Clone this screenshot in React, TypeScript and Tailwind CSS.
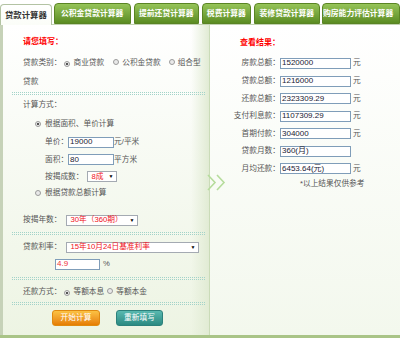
import React from "react";

const Radio = ({ checked }: { checked?: boolean }) => (
  <span className="inline-flex items-center justify-center w-[6px] h-[6px] rounded-full border border-[#9b9b9b] bg-[#e9e9e9] shrink-0">
    {checked && <span className="w-[2px] h-[2px] rounded-full bg-[#222]" />}
  </span>
);

const Divider = () => (
  <div className="w-[193px] h-[3px] border-y border-dotted border-[#a3d3c9]" />
);

const Input = ({ value, w, red }: { value: string; w: string; red?: boolean }) => (
  <div
    className={`${w} h-[11px] bg-white border border-[#7f9db9] flex items-center pl-[1px] text-[8px] leading-none ${
      red ? "text-[#f0303a]" : "text-[#1a1a33]"
    }`}
  >
    {value}
  </div>
);

const Select = ({ value, w }: { value: string; w: string }) => (
  <div
    className={`${w} h-[11px] bg-white border border-[#a4aab2] flex items-center justify-between pl-[3px] pr-[3px] text-[7.7px] leading-none text-[#f0101a]`}
  >
    <span>{value}</span>
    <span className="text-[5px] text-black">▼</span>
  </div>
);

const Tab = ({ label, cls, active }: { label: string; cls: string; active?: boolean }) =>
  active ? (
    <div
      className={`${cls} h-[21px] -mb-[1px] relative z-10 rounded-t-[4px] border border-b-0 border-[#b3c3a3] bg-gradient-to-b from-[#ffffff] to-[#fbfdf8] flex items-center justify-center text-[8.4px] font-bold text-[#333]`}
    >
      {label}
    </div>
  ) : (
    <div
      className={`${cls} h-[21px] rounded-t-[4px] border border-[#5a8424] bg-gradient-to-b from-[#96c458] to-[#5b8c22] flex items-center justify-center text-[7.8px] font-bold text-white whitespace-nowrap overflow-hidden`}
    >
      {label}
    </div>
  );

export default function App() {
  return (
    <div className="relative w-[400px] h-[338px] overflow-hidden bg-white font-['Liberation_Sans','Noto_Sans_CJK_SC',sans-serif] text-[7.7px] text-[#555]">
      {/* tabs */}
      <div className="h-[24px] flex items-end">
        <Tab label="贷款计算器" cls="w-[53px]" active />
        <Tab label="公积金贷款计算器" cls="w-[79px] ml-[2px]" />
        <Tab label="提前还贷计算器" cls="w-[67px] ml-[3px]" />
        <Tab label="税费计算器" cls="w-[50px] ml-[3px]" />
        <Tab label="装修贷款计算器" cls="w-[68px] ml-[3px]" />
        <Tab label="购房能力评估计算器" cls="w-[80px] ml-[2px] !justify-start pl-[0px]" />
      </div>

      {/* content */}
      <div className="h-[314px] flex border-t border-b-[3px] border-t-[#c2d2b2] border-b-[#a9c487]">
        {/* left panel */}
        <div className="w-[210px] border-l-[3px] border-r border-l-[#c6d2b8] border-r-[#cadbb8] bg-[linear-gradient(to_right,transparent_188px,#e1ebd4_206px),linear-gradient(to_bottom,#ffffff,#edf4e3)] flex flex-col pl-[9px] pt-[9px]">
          <div className="h-[16px] flex items-center pl-[11px] text-[8px] font-bold text-[#ff0000]">请您填写：</div>
          <div className="h-[19px] mt-[3px] flex items-center pl-[11px] whitespace-nowrap">
            <span>贷款类别：</span>
            <span className="ml-[3px]"><Radio checked /></span>
            <span className="ml-[3px]">商业贷款</span>
            <span className="ml-[9px]"><Radio /></span>
            <span className="ml-[3px]">公积金贷款</span>
            <span className="ml-[8px]"><Radio /></span>
            <span className="ml-[3px]">组合型</span>
          </div>
          <div className="h-[19px] flex items-center pl-[11px]">贷款</div>
          <div className="mt-[1px]"><Divider /></div>
          <div className="h-[18px] mt-[1px] flex items-center pl-[11px]">计算方式：</div>
          <div className="h-[18px] mt-[1px] flex items-center pl-[23px]">
            <Radio checked />
            <span className="ml-[4px]">根据面积、单价计算</span>
          </div>
          <div className="h-[18px] flex items-center pl-[33px]">
            <span>单价：</span>
            <Input value="19000" w="w-[46px]" />
            <span>元/平米</span>
          </div>
          <div className="h-[17px] flex items-center pl-[33px]">
            <span>面积：</span>
            <Input value="80" w="w-[46px]" />
            <span>平方米</span>
          </div>
          <div className="h-[17px] flex items-center pl-[33px]">
            <span>按揭成数：</span>
            <span className="ml-[4px]"><Select value="8成" w="w-[30px]" /></span>
          </div>
          <div className="h-[16px] flex items-center pl-[23px]">
            <Radio />
            <span className="ml-[4px]">根据贷款总额计算</span>
          </div>
          <div className="h-[18px] mt-[10px] flex items-center pl-[11px]">
            <span>按揭年数：</span>
            <span className="ml-[5px]"><Select value="30年（360期）" w="w-[72px]" /></span>
          </div>
          <div className="mt-[3px]"><Divider /></div>
          <div className="h-[18px] mt-[3px] flex items-center pl-[11px]">
            <span>贷款利率：</span>
            <span className="ml-[5px]"><Select value="15年10月24日基准利率" w="w-[133px]" /></span>
          </div>
          <div className="h-[14px] mt-[1px] flex items-center pl-[43px]">
            <Input value="4.9" w="w-[45px]" red />
            <span className="ml-[3px]">%</span>
          </div>
          <div className="mt-[6px]"><Divider /></div>
          <div className="h-[18px] mt-[3px] flex items-center pl-[11px] whitespace-nowrap">
            <span>还款方式：</span>
            <span className="ml-[3px]"><Radio checked /></span>
            <span className="ml-[3px]">等额本息</span>
            <span className="ml-[3px]"><Radio /></span>
            <span className="ml-[3px]">等额本金</span>
          </div>
          <div className="mt-[1px]"><Divider /></div>
          <div className="mt-[5px] flex pl-[40px]">
            <div className="w-[48px] h-[16px] rounded-[3px] border border-[#e08a10] bg-gradient-to-b from-[#fbc243] to-[#e57d00] flex items-center justify-center text-white text-[7.7px]">
              开始计算
            </div>
            <div className="ml-[16px] w-[47px] h-[16px] rounded-[3px] border border-[#2c817b] bg-gradient-to-b from-[#59b9b0] to-[#2b8a82] flex items-center justify-center text-white text-[7.7px]">
              重新填写
            </div>
          </div>
        </div>

        {/* right panel */}
        <div className="flex-1 bg-gradient-to-b from-[#ffffff] to-[#f3f8ed] flex flex-col pt-[10px]">
          <div className="h-[16px] flex items-center pl-[30px] text-[8px] font-bold text-[#ff0000]">查看结果：</div>
          {[
            ["房款总额：", "1520000", true, "h-[18px] mt-[3px]"],
            ["贷款总额：", "1216000", true, "h-[18px]"],
            ["还款总额：", "2323309.29", true, "h-[17px]"],
            ["支付利息款：", "1107309.29", true, "h-[18px]"],
            ["首期付款：", "304000", true, "h-[17px]"],
            ["贷款月数：", "360(月)", false, "h-[18px]"],
            ["月均还款：", "6453.64(元)", true, "h-[17px]"],
          ].map(([label, value, yuan, cls]) => (
            <div key={label as string} className={`${cls} flex items-center`}>
              <span className="w-[70px] text-right whitespace-nowrap">{label}</span>
              <Input value={value as string} w="w-[71px]" />
              {yuan && <span className="ml-[2px]">元</span>}
            </div>
          ))}
          <div className="h-[14px] flex items-center pl-[90px]">*以上结果仅供参考</div>
        </div>
      </div>

      {/* chevrons decoration */}
      <svg className="absolute left-[207px] top-[174px]" width="20" height="17" viewBox="0 0 20 17">
        <polyline points="1,1 8,8.5 1,16" fill="none" stroke="#b6dc9c" strokeWidth="1.6" />
        <polyline points="10,1 17,8.5 10,16" fill="none" stroke="#b6dc9c" strokeWidth="1.6" />
      </svg>
    </div>
  );
}
